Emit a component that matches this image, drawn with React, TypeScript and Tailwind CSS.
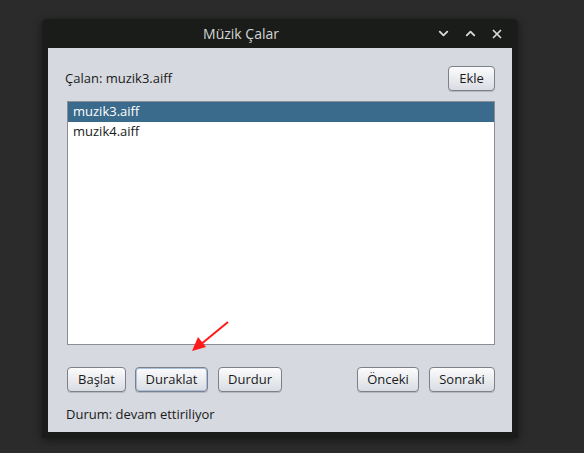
import { ChevronDown, ChevronUp, X } from "lucide-react";

const btn =
  "h-[25px] rounded-[4px] border border-[#7c8188] bg-gradient-to-b from-[#fcfcfd] to-[#d9dce2] text-[13px] text-[#1a1a1a] shadow-[0_1px_0_rgba(0,0,0,0.15)] flex items-center justify-center";

export default function App() {
  const songs = ["muzik3.aiff", "muzik4.aiff"];
  const selected = 0;

  return (
    <div
      className="w-[584px] h-[453px] bg-[#2b2b2b] pt-[19px] pl-[42px] relative"
      style={{ fontFamily: '"Open Sans", "Noto Sans", sans-serif' }}
    >
      <div className="w-[476px] h-[419px] bg-[#1a1c1a] rounded-t-[5px] shadow-[0_2px_8px_rgba(0,0,0,0.5)] flex flex-col px-[6px] pb-[6px]">
        {/* title bar */}
        <div className="h-[29px] flex items-center relative">
          <div className="flex-1 text-center text-[14px] text-[#d4d4d4] pr-[78px]">Müzik Çalar</div>
          <div className="absolute right-[8px] top-0 h-full flex items-center gap-[12px] text-[#d8d8d8]">
            <ChevronDown size={15} strokeWidth={3} />
            <ChevronUp size={15} strokeWidth={3} />
            <X size={14} strokeWidth={3} />
          </div>
        </div>

        {/* content */}
        <div className="flex-1 bg-[#d6d9df] pl-[19px] pr-[17px] pt-[18px] flex flex-col text-[13px] text-[#1a1a1a]">
          <div className="flex items-center justify-between h-[25px]">
            <span className="-ml-[2px]">Çalan: muzik3.aiff</span>
            <button className={btn + " w-[47px]"}>Ekle</button>
          </div>

          <div className="mt-[10px] h-[244px] bg-white border border-[#8a8f96]">
            {songs.map((s, i) => (
              <div
                key={s}
                className={
                  "h-[20px] flex items-center px-[5px] " +
                  (i === selected ? "bg-[#3a6a8c] text-white" : "text-[#1a1a1a]")
                }
              >
                {s}
              </div>
            ))}
          </div>

          <div className="mt-[22px] flex items-center">
            <button className={btn + " w-[59px]"}>Başlat</button>
            <button
              className={
                btn +
                " w-[73px] ml-[9px] border-[#6f93c2] shadow-[inset_0_0_0_1px_#a9c1de,0_1px_0_rgba(0,0,0,0.15)]"
              }
            >
              Duraklat
            </button>
            <button className={btn + " w-[64px] ml-[10px]"}>Durdur</button>
            <button className={btn + " w-[62px] ml-auto"}>Önceki</button>
            <button className={btn + " w-[66px] ml-[10px]"}>Sonraki</button>
          </div>

          <div className="mt-[13px] -ml-[1px]">Durum: devam ettiriliyor</div>
        </div>
      </div>

      {/* annotation arrow */}
      <svg className="absolute left-0 top-0" width="584" height="453">
        <line x1="228" y1="322" x2="200" y2="345" stroke="#ff1a1a" strokeWidth="2" />
        <polygon points="192,351 198,337 206,347" fill="#ff1a1a" />
      </svg>
    </div>
  );
}
